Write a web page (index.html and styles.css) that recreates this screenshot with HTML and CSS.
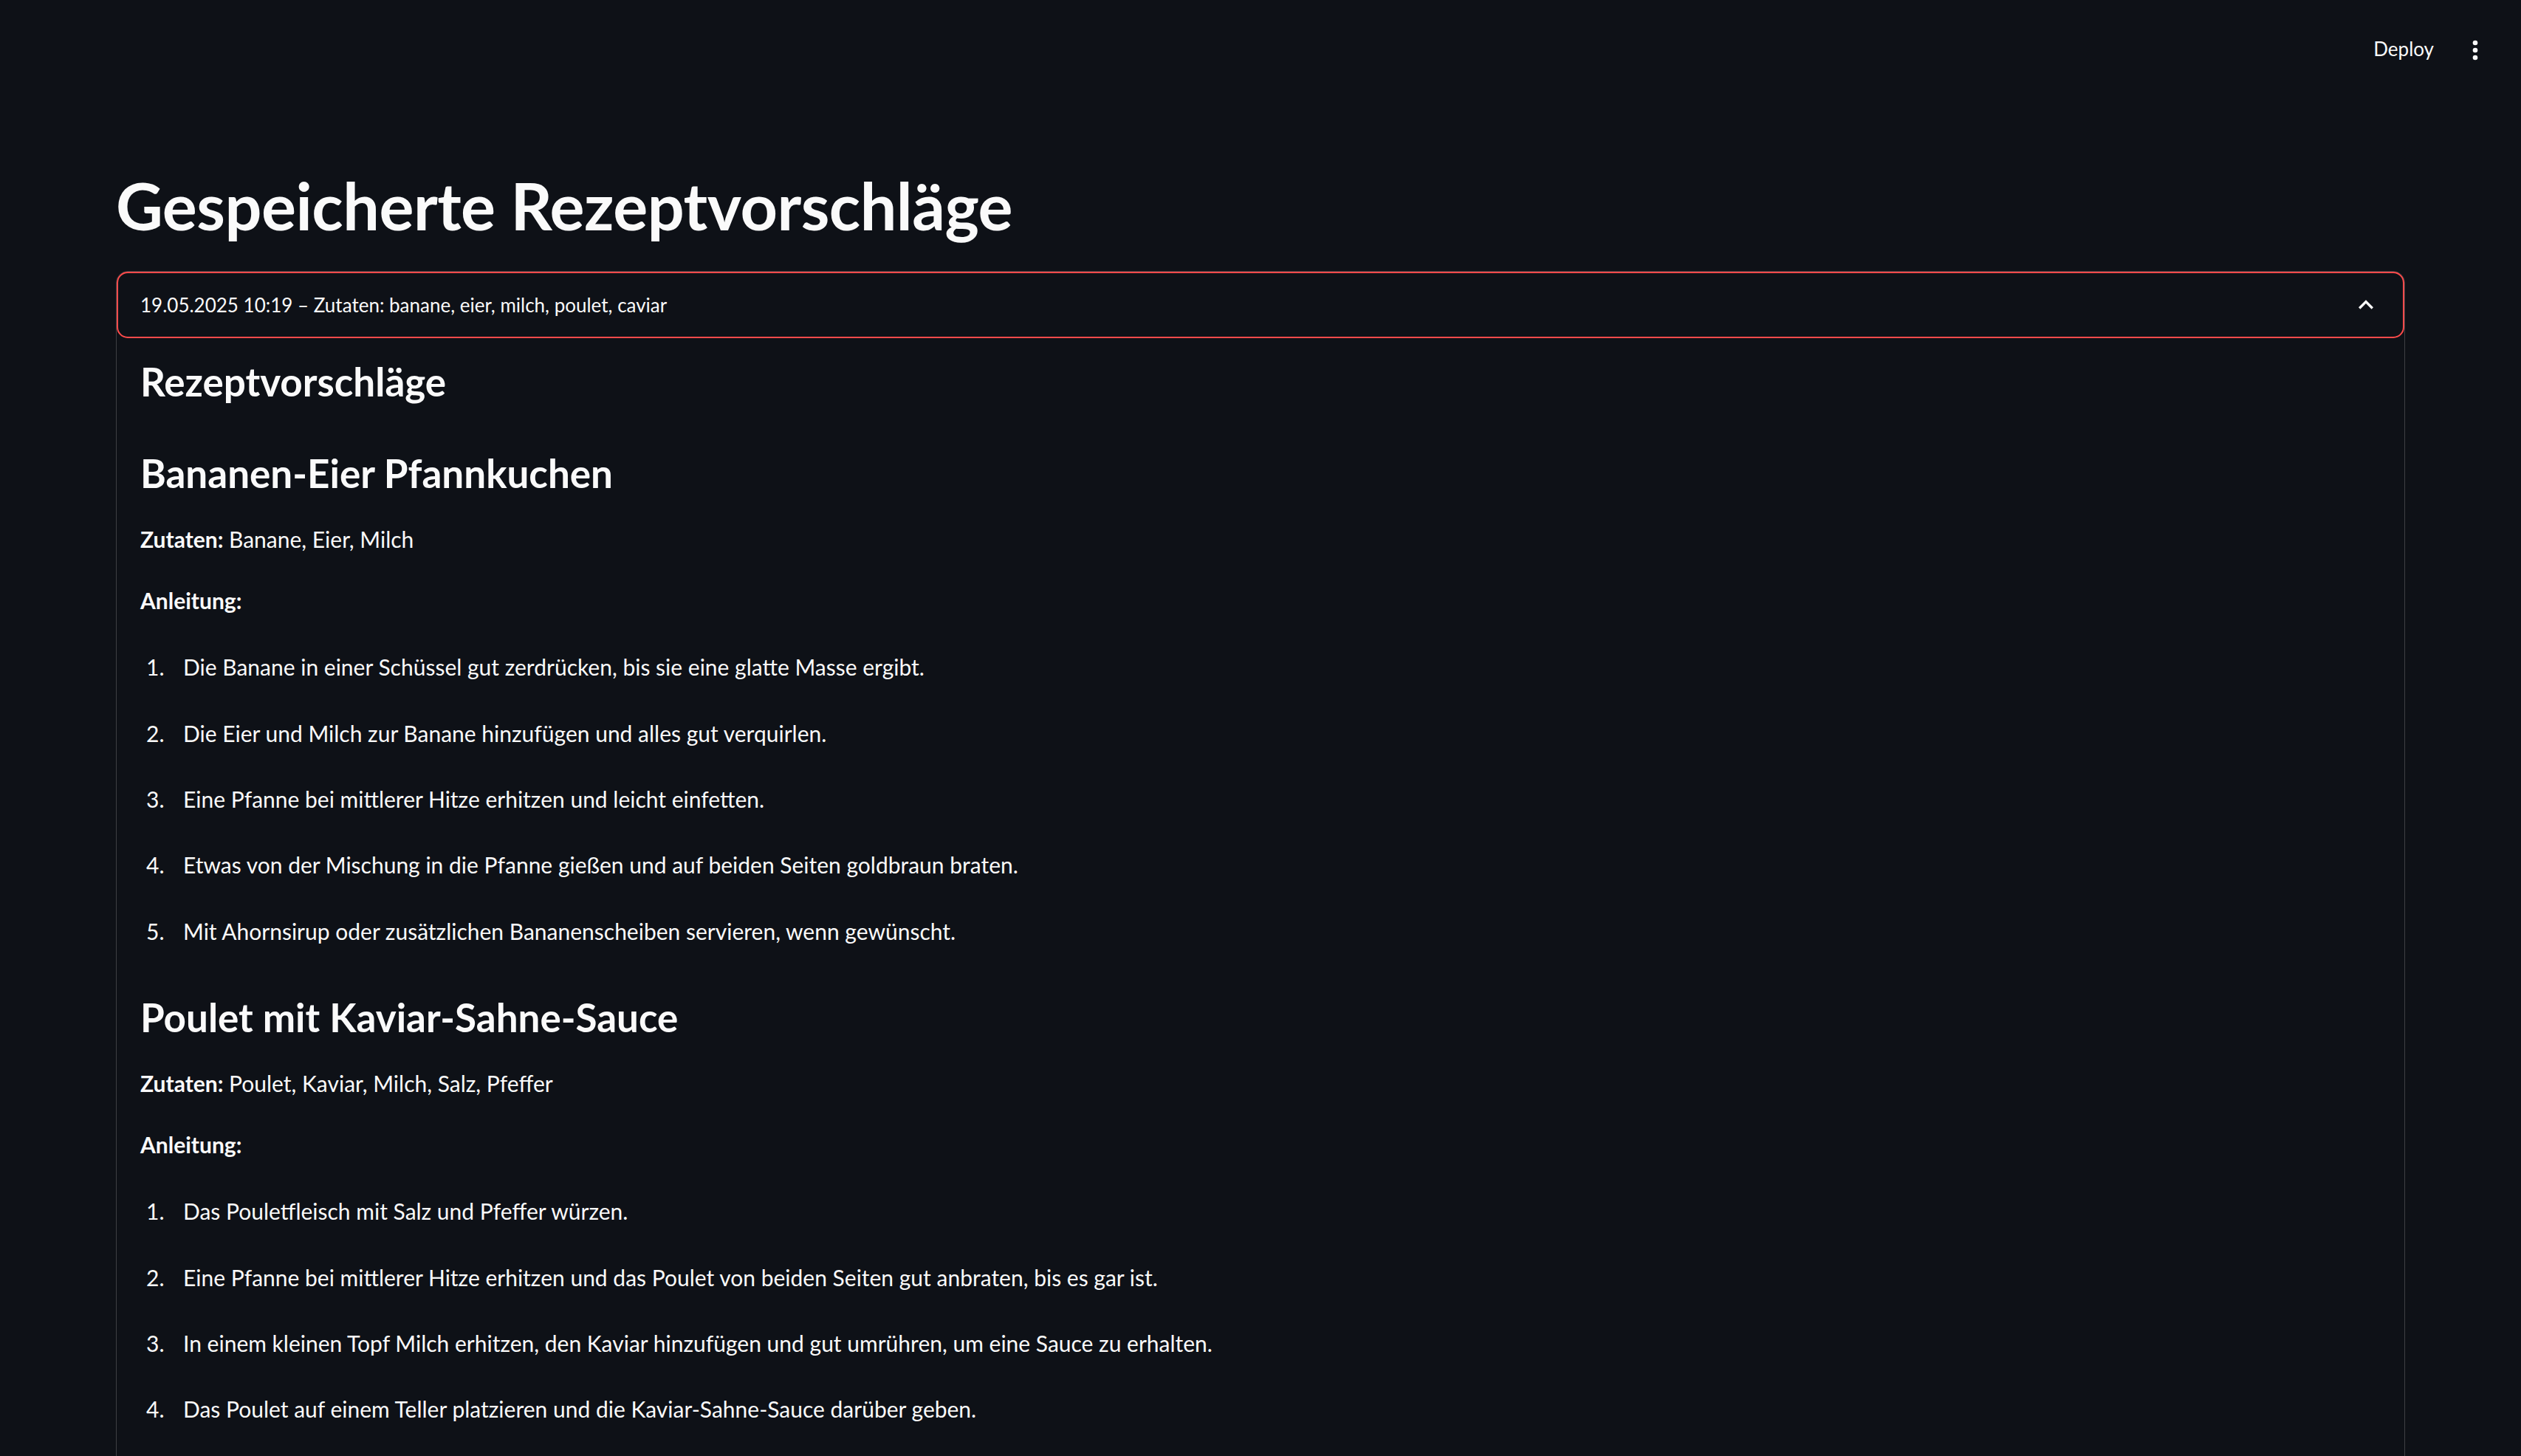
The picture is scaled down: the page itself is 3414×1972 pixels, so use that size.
FILE: index.html
```html
<!DOCTYPE html>
<html lang="de">
<head>
<meta charset="utf-8">
<title>Gespeicherte Rezeptvorschläge</title>
<link rel="stylesheet" href="styles.css">
</head>
<body>
<header class="topbar">
  <span class="deploy">Deploy</span>
  <svg class="menu-icon" viewBox="0 0 24 24" aria-hidden="true"><circle cx="12" cy="6" r="2"/><circle cx="12" cy="12" r="2"/><circle cx="12" cy="18" r="2"/></svg>
</header>
<main class="main">
  <h1 class="page-title">Gespeicherte Rezeptvorschläge</h1>
  <details class="expander" open>
    <summary class="expander-head">
      <span class="expander-label">19.05.2025 10:19 – Zutaten: banane, eier, milch, poulet, caviar</span>
      <svg class="chevron" viewBox="0 0 24 24" aria-hidden="true"><path d="M12 8l-6 6 1.41 1.41L12 10.83l4.59 4.58L18 14z"/></svg>
    </summary>
    <div class="expander-body">
      <h3 class="section-title first">Rezeptvorschläge</h3>

      <h3 class="section-title">Bananen-Eier Pfannkuchen</h3>
      <p class="para"><strong>Zutaten:</strong> Banane, Eier, Milch</p>
      <p class="para"><strong>Anleitung:</strong></p>
      <ol class="steps">
        <li>Die Banane in einer Schüssel gut zerdrücken, bis sie eine glatte Masse ergibt.</li>
        <li>Die Eier und Milch zur Banane hinzufügen und alles gut verquirlen.</li>
        <li>Eine Pfanne bei mittlerer Hitze erhitzen und leicht einfetten.</li>
        <li>Etwas von der Mischung in die Pfanne gießen und auf beiden Seiten goldbraun braten.</li>
        <li>Mit Ahornsirup oder zusätzlichen Bananenscheiben servieren, wenn gewünscht.</li>
      </ol>

      <h3 class="section-title">Poulet mit Kaviar-Sahne-Sauce</h3>
      <p class="para"><strong>Zutaten:</strong> Poulet, Kaviar, Milch, Salz, Pfeffer</p>
      <p class="para"><strong>Anleitung:</strong></p>
      <ol class="steps">
        <li>Das Pouletfleisch mit Salz und Pfeffer würzen.</li>
        <li>Eine Pfanne bei mittlerer Hitze erhitzen und das Poulet von beiden Seiten gut anbraten, bis es gar ist.</li>
        <li>In einem kleinen Topf Milch erhitzen, den Kaviar hinzufügen und gut umrühren, um eine Sauce zu erhalten.</li>
        <li>Das Poulet auf einem Teller platzieren und die Kaviar-Sahne-Sauce darüber geben.</li>
      </ol>
    </div>
  </details>
</main>
</body>
</html>
```

FILE: styles.css
```css
html, body {
  margin: 0;
  padding: 0;
  overflow: hidden;
  background: #0e1117;
}

body {
  color: #fafafa;
  font-family: Lato, "Source Sans Pro", "Noto Sans", sans-serif;
  -webkit-font-smoothing: antialiased;
}

.topbar {
  height: 136px;
  display: flex;
  justify-content: flex-end;
  align-items: center;
  padding-right: 42px;
  box-sizing: border-box;
  gap: 36px;
}

.deploy {
  font-size: 26px;
  line-height: 40px;
  font-weight: 400;
  color: #fafafa;
  margin-bottom: 4px;
}

.menu-icon {
  width: 40px;
  height: 40px;
  fill: #fafafa;
}

.main {
  padding: 0 157px;
}

.page-title {
  margin: 90px 0 35px;
  font-size: 88px;
  line-height: 105.6px;
  font-weight: 700;
  letter-spacing: -0.5px;
}

.expander {
  border: 1px solid rgba(250, 250, 250, 0.2);
  border-radius: 16px;
  padding-bottom: 120px;
}

.expander-head {
  list-style: none;
  display: flex;
  align-items: center;
  justify-content: space-between;
  height: 90px;
  box-sizing: border-box;
  border: 2px solid #ff4b4b;
  border-radius: 15px;
  padding: 0 30px;
  cursor: pointer;
}

.expander-head::-webkit-details-marker {
  display: none;
}

.expander-label {
  font-size: 26px;
  line-height: 40px;
}

.chevron {
  width: 40px;
  height: 40px;
  fill: #fafafa;
}

.expander-body {
  display: flex;
  flex-direction: column;
  padding: 0 32px;
}

.section-title {
  margin: 61px 0 0;
  font-size: 53px;
  line-height: 63.6px;
  font-weight: 700;
}

.section-title.first {
  margin-top: 27px;
}

.steps + .section-title {
  margin-top: 59px;
}

.para {
  margin: 32.5px 0 0;
  font-size: 30px;
  line-height: 51.2px;
}

.para + .para {
  margin-top: 31.8px;
}

.para strong {
  font-weight: 700;
}

.steps {
  margin: 38.8px 0 0;
  padding: 0;
  list-style: none;
  counter-reset: step;
  display: flex;
  flex-direction: column;
  gap: 38.2px;
}

.steps li {
  counter-increment: step;
  display: flex;
  font-size: 30px;
  line-height: 51.2px;
}

.steps li::before {
  content: counter(step) ".";
  width: 50px;
  padding-left: 8px;
  flex: none;
}
```
